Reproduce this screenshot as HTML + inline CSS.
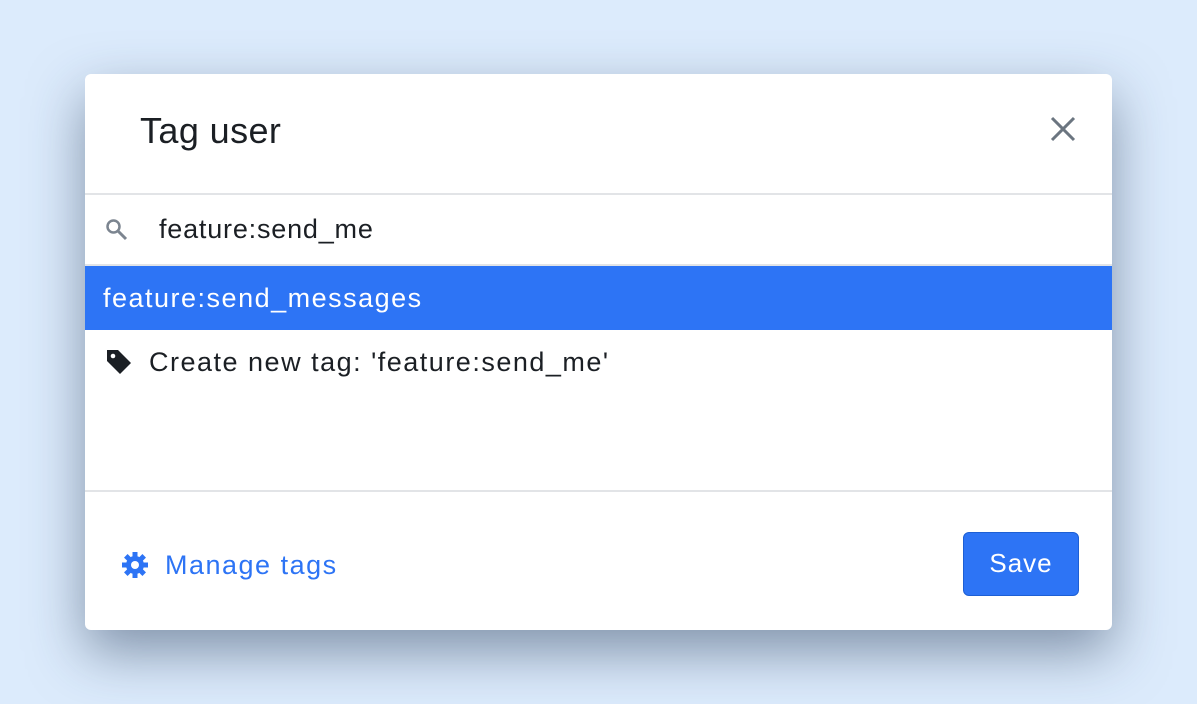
<!DOCTYPE html>
<html><head><style>
body{margin:0;width:1197px;height:704px;background:#dcebfc;font-family:"Liberation Sans",sans-serif;position:relative;overflow:hidden}
.m{position:absolute;left:85px;top:74px;width:1027px;height:556px;background:#fff;border-radius:6px;box-shadow:0 22px 55px rgba(40,60,90,.5)}
.t{position:absolute;left:55px;top:36px;font-size:36px;letter-spacing:0.4px;color:#1b1f24}
.x{position:absolute;left:965px;top:42px}
.l{position:absolute;left:0;width:1027px;height:2px;background:#e2e4e7}
.q{position:absolute;left:74px;top:140px;font-size:27px;letter-spacing:0.8px;color:#1b1f24}
.h{position:absolute;left:0;top:192px;width:1027px;height:64px;background:#2d74f5;color:#fff;font-size:27px;letter-spacing:1.5px;line-height:64px;box-sizing:border-box;padding-left:18px}
.c{position:absolute;left:64px;top:273px;font-size:27px;letter-spacing:1.5px;color:#1b1f24}
.mt{position:absolute;left:80px;top:476px;font-size:27px;letter-spacing:1.5px;color:#2d74f5}
.s{position:absolute;left:878px;top:458px;width:116px;height:64px;background:#2d74f5;border:1px solid #1d5fd4;border-radius:6px;box-sizing:border-box;color:#fff;font-size:26px;letter-spacing:1px;text-align:center;line-height:60px}
</style></head><body>
<div class="m">
<div class="t">Tag user</div>
<svg class="x" width="26" height="26" viewBox="0 0 26 26"><path d="M2 2L24 24M24 2L2 24" stroke="#6b7580" stroke-width="3"/></svg>
<div class="l" style="top:119px"></div>
<svg style="position:absolute;left:19px;top:143px" width="26" height="26" viewBox="0 0 26 26"><circle cx="9.5" cy="9.5" r="6" stroke="#7c8590" stroke-width="2.5" fill="none"/><path d="M14 14L22 22" stroke="#7c8590" stroke-width="3"/></svg>
<div class="q">feature:send_me</div>
<div class="l" style="top:190px"></div>
<div class="h">feature:send_messages</div>
<svg style="position:absolute;left:20px;top:274px" width="28" height="28" viewBox="0 0 28 28"><path d="M2 2h11l13 13-11 11L2 13z" fill="#1b1f24"/><circle cx="8" cy="8" r="2.3" fill="#fff"/></svg>
<div class="c">Create new tag: 'feature:send_me'</div>
<div class="l" style="top:416px"></div>
<svg style="position:absolute;left:36px;top:477px" width="28" height="28" viewBox="0 0 28 28"><g fill="#2d74f5"><circle cx="14" cy="14" r="9"/><g stroke="#2d74f5" stroke-width="5"><path d="M14 1v26M1 14h26M4.8 4.8l18.4 18.4M23.2 4.8L4.8 23.2"/></g></g><circle cx="14" cy="14" r="4" fill="#fff"/></svg>
<div class="mt">Manage tags</div>
<div class="s">Save</div>
</div>
</body></html>
